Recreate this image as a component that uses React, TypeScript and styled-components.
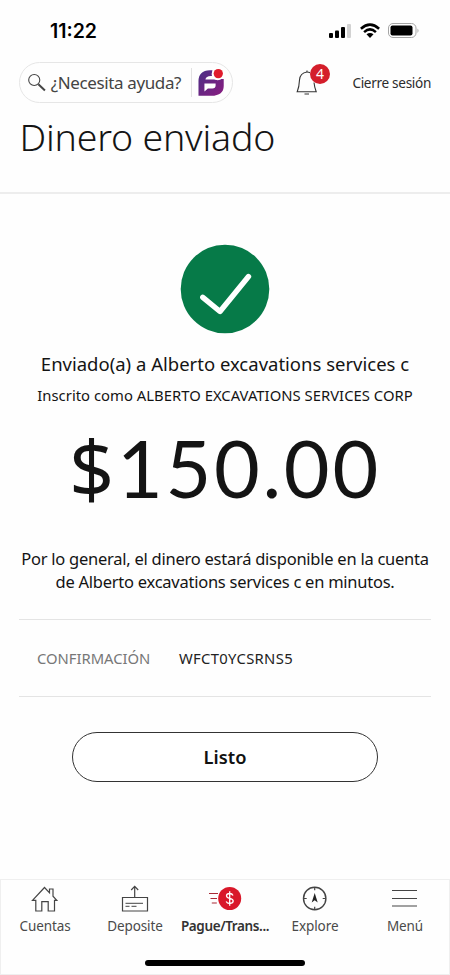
import React from 'react';
import styled, { createGlobalStyle } from 'styled-components';

const Global = createGlobalStyle`
  * { box-sizing: border-box; }
  body { margin: 0; background: #fefefe; }
`;

const Screen = styled.div`
  width: 450px;
  height: 975px;
  display: flex;
  flex-direction: column;
  overflow: hidden;
  background: #fefefe;
  color: #141414;
  font-family: 'Noto Sans', 'Open Sans', sans-serif;
  white-space: nowrap;
`;

const StatusBar = styled.div`
  height: 62px;
  flex: none;
  display: flex;
  align-items: center;
  justify-content: space-between;
  padding: 0 30px 0 50px;
`;

const Clock = styled.span`
  font: 600 19.5px/22px Inter, sans-serif;
  letter-spacing: 0;
  color: #000;
`;

const StatusIcons = styled.svg`
  width: 92px;
  height: 18px;
`;

const TopBar = styled.div`
  height: 41px;
  flex: none;
  display: flex;
  align-items: center;
  padding: 0 19px;
`;

const SearchPill = styled.div`
  width: 214px;
  height: 41px;
  display: flex;
  align-items: center;
  padding: 0 6px 0 8px;
  border: 1px solid #e6e6e6;
  border-radius: 21px;
`;

const SearchText = styled.span`
  width: 142px;
  margin-left: 3px;
  font-size: 17px;
  line-height: 24px;
  letter-spacing: -0.38px;
  color: #444;
`;

const PillDivider = styled.span`
  width: 1px;
  height: 29px;
  margin-right: 6px;
  background: #e2e2e2;
`;

const Bell = styled.div`
  position: relative;
  width: 34px;
  height: 34px;
  margin-left: 62px;
`;

const Badge = styled.span`
  position: absolute;
  left: 15px;
  top: -2px;
  width: 20px;
  height: 20px;
  border-radius: 50%;
  background: #d41e2b;
  color: #fff;
  font-size: 14px;
  line-height: 20px;
  text-align: center;
`;

const SignOut = styled.span`
  margin-left: auto;
  font-size: 13.6px;
  line-height: 20px;
  letter-spacing: -0.32px;
  color: #2c2c2c;
`;

const Header = styled.header`
  height: 91px;
  flex: none;
  padding: 8px 0 0 19.5px;
  border-bottom: 2px solid #ededed;
`;

const Title = styled.h1`
  margin: 0;
  font-size: 37.5px;
  line-height: 52px;
  font-weight: 300;
  letter-spacing: -0.2px;
`;

const Content = styled.main`
  flex: 1;
  display: flex;
  flex-direction: column;
  align-items: center;
  padding: 50px 19px 0;
`;

const SuccessMark = styled.svg`
  width: 90px;
  height: 90px;
  flex: none;
`;

const Recipient = styled.p`
  margin: 16px 0 0;
  font-size: 18.5px;
  line-height: 28px;
  letter-spacing: 0;
`;

const Enrolled = styled.p`
  margin: 7px 0 0;
  font-size: 14.8px;
  line-height: 20px;
  letter-spacing: 0.03px;
`;

const Amount = styled.div`
  height: 112px;
  margin-top: 7px;
  display: flex;
  align-items: baseline;
  font-family: Lato, sans-serif;
  font-size: 79px;
  line-height: 112px;
  letter-spacing: 2.7px;
`;

const Currency = styled.span`
  font-family: 'Noto Sans', sans-serif;
  line-height: 1;
`;

const Notice = styled.p`
  margin: 24px 0 0;
  font-size: 16.5px;
  line-height: 22.5px;
  letter-spacing: -0.25px;
  text-align: center;
`;

const Details = styled.div`
  width: 412px;
  height: 78px;
  margin-top: 26px;
  display: flex;
  align-items: center;
  padding-left: 18px;
  border: solid #e4e4e4;
  border-width: 1px 0;
  font-size: 14.8px;
`;

const DetailLabel = styled.span`
  width: 142px;
  letter-spacing: -0.02px;
  color: #777;
`;

const DetailValue = styled.span`
  letter-spacing: 0.32px;
  color: #222;
`;

const DoneButton = styled.button`
  width: 306px;
  height: 50px;
  margin-top: 35px;
  padding: 0;
  border: 1.5px solid #333;
  border-radius: 25px;
  background: #fff;
  color: #111;
  font: 600 18.3px/26px 'Noto Sans', sans-serif;
`;

const BottomNav = styled.nav`
  height: 96px;
  flex: none;
  display: flex;
  flex-direction: column;
  align-items: center;
  justify-content: space-between;
  padding-bottom: 8px;
  border: 1px solid #efefef;
`;

const Tabs = styled.div`
  width: 450px;
  display: grid;
  grid-template-columns: repeat(5, 90px);
`;

const Tab = styled.div<{ $active?: boolean }>`
  display: flex;
  flex-direction: column;
  align-items: center;
  font-size: 13.5px;
  line-height: 20px;
  letter-spacing: ${p => (p.$active ? '-0.38px' : '-0.1px')};
  font-weight: ${p => (p.$active ? 600 : 400)};
  color: ${p => (p.$active ? '#333' : '#4a4a4a')};
`;

const TabIcon = styled.svg`
  width: 36px;
  height: 36px;
  fill: none;
  stroke: #444;
  stroke-width: 1.2;
`;

const HomeIndicator = styled.div`
  width: 160px;
  height: 6px;
  border-radius: 3px;
  background: #000;
`;

const SearchIcon = () => (
  <svg width="20" height="20" viewBox="0 0 20 20" fill="none" stroke="#444">
    <circle cx="6.3" cy="7" r="5.6" strokeWidth="1.1" />
    <path d="M10.500 11.200l6.600 6.400" strokeWidth="2" />
  </svg>
);

const AssistantLogo = () => (
  <svg width="28" height="30" viewBox="0 0 28 30">
    <defs>
      <linearGradient id="assistant" x1="0" y1="0" x2="1" y2="1">
        <stop offset="0" stopColor="#4a2f86" />
        <stop offset="1" stopColor="#8a1c80" />
      </linearGradient>
    </defs>
    <path
      d="M14.500 2H12Q0.500 2.500 0.500 13V28H13.500Q26 27.500 26 18V11H20V11.500H7.500Q8 7.800 13 7.800H15Z"
      fill="url(#assistant)"
    />
    <path d="M6.500 15.500H17.800V17.500Q17.800 20.500 14.500 20.500H10L6.500 23.500Z" fill="#fff" />
    <circle cx="20" cy="6" r="6.200" fill="#fff" />
    <circle cx="20.500" cy="5.500" r="4.700" fill="#e01b2c" />
  </svg>
);

const tabs = [
  {
    label: 'Cuentas',
    icon: <path d="M5.500 20.300L17.500 7.500l5 5.300V9h3.500v7.200l3.800 4.100H27.500V31H21.200V21.700h-6.400V31H8.800V20.300z" />,
  },
  {
    label: 'Deposite',
    icon: (
      <>
        <path d="M5.500 17.500h25v13.500h-25zM17.700 17V6.500M14.200 10l3.500-3.700 3.500 3.700" />
        <path d="M8.500 23.300h17.500M8.500 26.300h4M14.500 26.300h5" strokeWidth="1" />
      </>
    ),
  },
  {
    label: 'Pague/Trans...',
    active: true,
    icon: (
      <>
        <path d="M2 13.500h9M3.500 18.500h6.500M4.800 23h5" stroke="#a82a36" />
        <circle cx="22.700" cy="18.500" r="11.500" fill="#d9182a" stroke="none" />
        <path
          d="M26 15.500q-.8-2-3.300-2-3.200 0-3.200 2.300 0 1.900 3.200 2.500 3.500.7 3.500 2.800 0 2.400-3.400 2.400-2.800 0-3.600-2M22.700 11.200v14.500"
          stroke="#fff"
          strokeWidth="1.300"
        />
      </>
    ),
  },
  {
    label: 'Explore',
    icon: (
      <>
        <circle cx="17.700" cy="18.500" r="11.200" strokeWidth="1.400" />
        <path d="M17.700 7.200v3M17.700 26.700v3M6.700 18.500h3M25.700 18.500h3" />
        <path d="M17.700 13l3 9.500-3-2.200-3 2.200z" fill="#222" stroke="none" />
      </>
    ),
  },
  { label: 'Menú', icon: <path d="M5 10.500h25M5 18.500h25M5 26h25" /> },
];

export default function App() {
  return (
    <>
      <Global />
      <Screen>
        <StatusBar>
          <Clock>11:22</Clock>
          <StatusIcons viewBox="0 0 92 18">
            <rect x="1" y="11" width="4" height="5" rx="1" />
            <rect x="7" y="8.500" width="4" height="7.500" rx="1" />
            <rect x="13" y="5" width="4" height="11" rx="1" />
            <rect x="19" y="2" width="4" height="14" rx="1" fill="#d2d2d2" />
            <g fill="none" stroke="#000" strokeWidth="2.500">
              <path d="M32.900 6.700Q42-1.500 51.100 6.700" />
              <path d="M36.100 10.100Q42 4.700 47.900 10.100" />
            </g>
            <path d="M38.500 12.300Q42 9.500 45.500 12.300L42 16Z" />
            <rect x="60.500" y="1.500" width="27.500" height="14" rx="4.500" fill="none" stroke="#a5a5a5" />
            <rect x="62.500" y="3.500" width="22" height="10" rx="2" />
            <path d="M89.500 6.500q2 2 0 4.500z" fill="#a5a5a5" />
          </StatusIcons>
        </StatusBar>
        <TopBar>
          <SearchPill>
            <SearchIcon />
            <SearchText>¿Necesita ayuda?</SearchText>
            <PillDivider />
            <AssistantLogo />
          </SearchPill>
          <Bell>
            <svg width="34" height="34" viewBox="0 0 34 34" fill="none" stroke="#333" strokeWidth="1.100">
              <path d="M12 6Q5 7 4.500 14Q4.200 21 2.200 25.700H21.200Q19.500 21.500 19 16.500" />
              <path d="M12 6V4.500M12 6q2 .1 3 .8M9.500 28h4.500" />
            </svg>
            <Badge>4</Badge>
          </Bell>
          <SignOut>Cierre sesión</SignOut>
        </TopBar>
        <Header>
          <Title>Dinero enviado</Title>
        </Header>
        <Content>
          <SuccessMark viewBox="0 0 90 90">
            <circle cx="45" cy="45" r="44.300" fill="#067a48" />
            <path
              d="M22.800 53.300L40 67.500L68.500 32.500"
              fill="none"
              stroke="#fff"
              strokeWidth="5.400"
              strokeLinecap="round"
              strokeLinejoin="round"
            />
          </SuccessMark>
          <Recipient>Enviado(a) a Alberto excavations services c</Recipient>
          <Enrolled>Inscrito como ALBERTO EXCAVATIONS SERVICES CORP</Enrolled>
          <Amount>
            <Currency>$</Currency>150.00
          </Amount>
          <Notice>
            Por lo general, el dinero estará disponible en la cuenta
            <br />
            de Alberto excavations services c en minutos.
          </Notice>
          <Details>
            <DetailLabel>CONFIRMACIÓN</DetailLabel>
            <DetailValue>WFCT0YCSRNS5</DetailValue>
          </Details>
          <DoneButton>Listo</DoneButton>
        </Content>
        <BottomNav>
          <Tabs>
            {tabs.map(t => (
              <Tab key={t.label} $active={t.active}>
                <TabIcon viewBox="0 0 36 36">{t.icon}</TabIcon>
                {t.label}
              </Tab>
            ))}
          </Tabs>
          <HomeIndicator />
        </BottomNav>
      </Screen>
    </>
  );
}
